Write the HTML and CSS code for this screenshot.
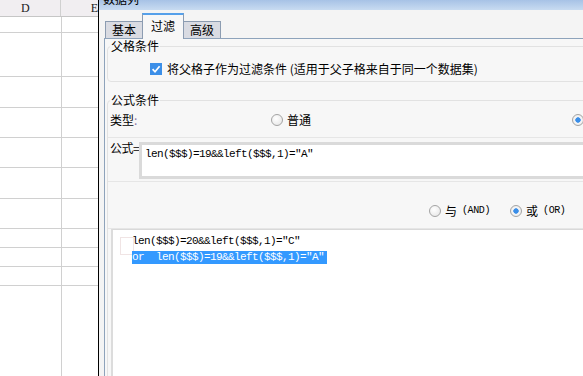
FILE: index.html
```html
<!DOCTYPE html>
<html lang="zh-CN">
<head>
  <meta charset="UTF-8">
  <title>数据列 - 过滤</title>
  <link rel="stylesheet" href="styles.css">
</head>
<body>

  <!-- Spreadsheet behind the dialog -->
  <div class="sheet">
    <div class="sheet-head">
      <div class="cell cell-d">D</div>
      <div class="cell cell-e">E</div>
    </div>
    <div class="row h16"><div class="cell cell-d"></div><div class="cell cell-e"></div></div>
    <div class="row h44"><div class="cell cell-d"></div><div class="cell cell-e"></div></div>
    <div class="row h31"><div class="cell cell-d"></div><div class="cell cell-e"></div></div>
    <div class="row h30"><div class="cell cell-d"></div><div class="cell cell-e"></div></div>
    <div class="row h30"><div class="cell cell-d"></div><div class="cell cell-e"></div></div>
    <div class="row h31"><div class="cell cell-d"></div><div class="cell cell-e"></div></div>
    <div class="row h30"><div class="cell cell-d"></div><div class="cell cell-e"></div></div>
    <div class="row h19"><div class="cell cell-d"></div><div class="cell cell-e"></div></div>
    <div class="row h19"><div class="cell cell-d"></div><div class="cell cell-e"></div></div>
    <div class="row h19"><div class="cell cell-d"></div><div class="cell cell-e"></div></div>
    <div class="row row-rest"><div class="cell cell-d"></div><div class="cell cell-e"></div></div>
  </div>

  <!-- Dialog -->
  <div class="dialog">
    <div class="titlebar"><span>数据列</span></div>

    <div class="dialog-body">
      <div class="tabs">
        <div class="tab">基本</div>
        <div class="tab active">过滤</div>
        <div class="tab">高级</div>
      </div>

      <div class="pane">
        <fieldset class="group group-parent">
          <legend>父格条件</legend>
          <label class="check-row">
            <span class="checkbox">
              <svg width="12" height="12" viewBox="0 0 12 12"><path d="M2.6 6.2 L5 8.8 L9.6 3.2" fill="none" stroke="#fff" stroke-width="1.7"/></svg>
            </span>
            将父格子作为过滤条件 (适用于父子格来自于同一个数据集)
          </label>
        </fieldset>

        <fieldset class="group group-formula">
          <legend>公式条件</legend>

          <div class="type-row">
            <span class="type-label">类型<span class="colon">:</span></span>
            <span class="option"><span class="radio"></span>普通</span>
            <span class="option option-far"><span class="radio on"></span></span>
          </div>

          <div class="formula-row">
            <span class="formula-label">公式=</span>
            <div class="formula-box code">len($$$)=19&amp;&amp;left($$$,1)="A"</div>
          </div>

          <div class="logic-row">
            <span class="option"><span class="radio"></span>与<span class="code small">(AND)</span></span>
            <span class="option option-or"><span class="radio on"></span>或<span class="code small">(OR)</span></span>
          </div>

          <div class="list">
            <div class="item"><span class="code">len($$$)=20&amp;&amp;left($$$,1)="C"</span></div>
            <div class="item selected"><span class="code">or  len($$$)=19&amp;&amp;left($$$,1)="A"</span></div>
          </div>
        </fieldset>
      </div>
    </div>
  </div>

</body>
</html>
```

FILE: styles.css
```css
/* Basic Reset */
* {
  margin: 0;
  padding: 0;
  box-sizing: border-box;
}

body {
  display: flex;
  width: 583px;
  height: 376px;
  overflow: hidden;
  background-color: #fff;
  font-family: "Noto Sans CJK SC", "Noto Sans", sans-serif;
  font-size: 12px;
  color: #000;
}

.code {
  font-family: "Liberation Mono", "DejaVu Sans Mono", monospace;
  font-size: 11px;
  letter-spacing: -0.6px;
  white-space: pre;
}

/* Spreadsheet */
.sheet {
  flex: none;
  width: 99px;
  display: flex;
  flex-direction: column;
  border-right: 1px solid #000;
}

.sheet-head {
  flex: none;
  display: flex;
  height: 17px;
  background-color: #f1eef1;
  border-bottom: 1px solid #c6c6c6;
  font-family: "Liberation Serif", serif;
  font-size: 12px;
  line-height: 16px;
  color: #222;
}

.row {
  flex: none;
  display: flex;
  border-bottom: 1px solid #d0d0d0;
}

.h16 { height: 16px; }
.h44 { height: 44px; }
.h31 { height: 31px; }
.h30 { height: 30px; }
.h19 { height: 19px; }

.row-rest {
  flex: 1;
  border-bottom: none;
}

.cell-d {
  width: 62px;
  padding-left: 21px;
  border-right: 1px solid #d0d0d0;
}

.cell-e {
  flex: 1;
  padding-left: 30px;
}

/* Dialog */
.dialog {
  flex: none;
  width: 560px;
  display: flex;
  flex-direction: column;
  background-color: #f4f4f4;
}

.titlebar {
  flex: none;
  height: 10px;
  overflow: hidden;
  padding-left: 4px;
  background: linear-gradient(#a7c2e6, #c8dbf1);
}

.titlebar span {
  display: block;
  margin-top: -7px;
  line-height: 12px;
}

.dialog-body {
  flex: 1;
  display: flex;
  flex-direction: column;
  padding-left: 5px;
}

/* Tabs */
.tabs {
  flex: none;
  display: flex;
  align-items: flex-end;
  height: 28px;
  padding-left: 1px;
}

.tab {
  height: 17px;
  padding: 0 6px;
  border: 1px solid #8c9cb1;
  border-bottom: none;
  background-color: #d9dbe2;
  line-height: 15px;
  text-align: center;
}

.tab + .tab {
  margin-left: -1px;
}

.tab.active {
  position: relative;
  z-index: 1;
  height: 26px;
  margin-bottom: -1px;
  padding: 0 8px;
  border-top: 2px solid #55a0ea;
  background-color: #f7f7f7;
  line-height: 21px;
}

.pane {
  flex: 1;
  padding-left: 2px;
  border-top: 1px solid #8ea3bb;
  border-left: 1px solid #8ea3bb;
  background-color: #f7f7f7;
}

/* Group boxes */
.group {
  min-width: 0;
  border: 1px solid #e2e2e2;
  border-radius: 4px;
}

.group legend {
  margin-left: 2px;
  padding: 0 1px;
  line-height: 14px;
}

.check-row {
  display: flex;
  align-items: center;
  height: 13px;
  margin: 9px 0 6px 42px;
  line-height: 13px;
  white-space: nowrap;
}

.checkbox {
  display: flex;
  width: 12px;
  height: 12px;
  margin-right: 5px;
  background-color: #3c8fe8;
}

.group-formula {
  margin-top: 11px;
  height: 300px;
}

.type-row {
  display: flex;
  padding: 6px 0 11px 2px;
  line-height: 13px;
  border-bottom: 1px solid #e6e6e6;
}

.type-label {
  width: 161px;
}

.colon {
  color: #8a7aa6;
}

.option {
  display: flex;
  align-items: center;
  gap: 4px;
  white-space: nowrap;
}

.option-far {
  margin-left: 261px;
}

.radio {
  flex: none;
  width: 12px;
  height: 12px;
  border: 1px solid #a4a4a4;
  border-radius: 50%;
  background: radial-gradient(circle at 40% 35%, #ffffff, #e3e3e3);
}

.radio.on {
  background: radial-gradient(circle, #3a8ee8 0 2.4px, #f6f6f6 3px, #e6e6e6 100%);
}

.formula-row {
  display: flex;
  padding: 4px 0 2px 2px;
  border-bottom: 1px solid #e6e6e6;
}

.formula-label {
  flex: none;
  width: 29px;
  margin-top: -1px;
  line-height: 13px;
  white-space: nowrap;
  letter-spacing: -0.5px;
}

.formula-box {
  flex: 1;
  height: 37px;
  padding: 3px;
  border: 3px solid #dadada;
  background-color: #fff;
  line-height: 13px;
}

.logic-row {
  display: flex;
  padding: 20px 0 9px 321px;
  border-bottom: 1px solid #e6e6e6;
}

.small {
  font-size: 10px;
  letter-spacing: -0.4px;
  margin-left: 1px;
}

.option-or {
  margin-left: 20px;
}

/* Condition list */
.list {
  position: relative;
  height: 200px;
  margin-left: 3px;
  border-top: 1px solid #d9d9d9;
  border-left: 2px solid #dcdcdc;
  background-color: #fff;
}

.list::before {
  content: "";
  position: absolute;
  left: 7px;
  top: 7px;
  width: 12px;
  height: 16px;
  border: 1px solid #f0e4e4;
}

.item {
  position: relative;
  height: 16px;
  padding-left: 19px;
}

.item span {
  display: inline-block;
  margin-top: 1px;
  padding-right: 3px;
  line-height: 13px;
}

.item.selected span {
  background-color: #3399ff;
  color: #fff;
}
```
